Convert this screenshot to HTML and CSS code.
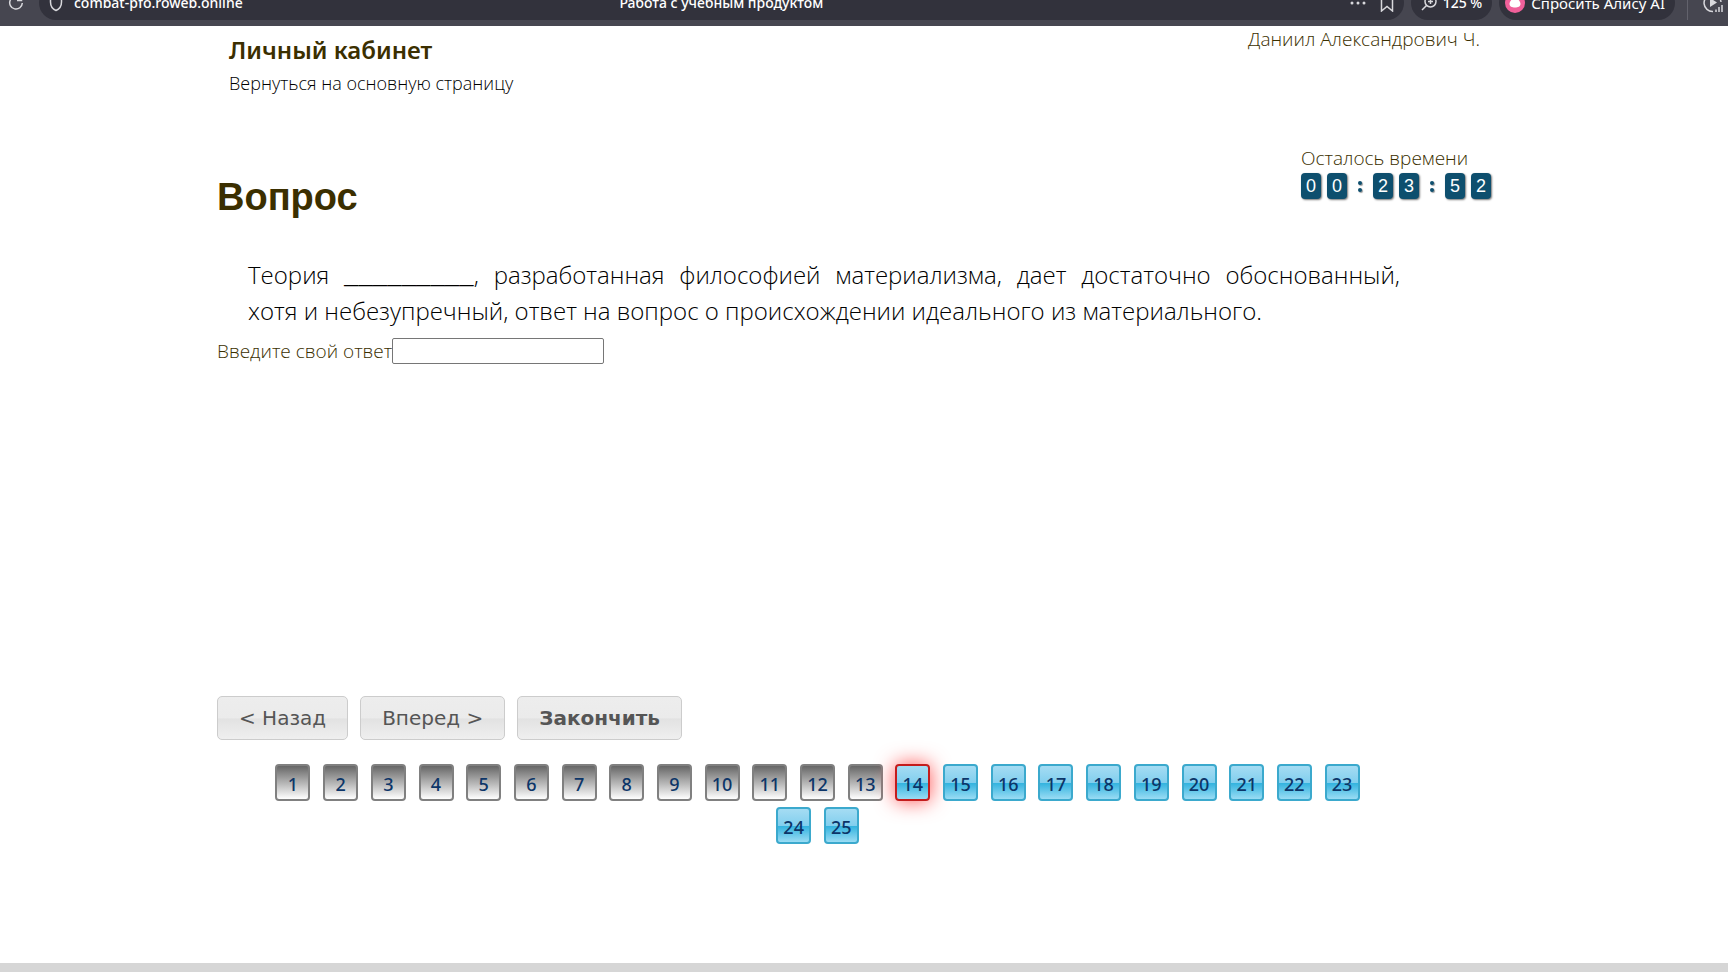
FILE: index.html
```html
<!DOCTYPE html>
<html lang="ru">
<head>
<meta charset="utf-8">
<title>Работа с учебным продуктом</title>
<link rel="stylesheet" href="styles.css">
</head>
<body>
<header class="browser">
  <button class="tool reload" aria-label="Обновить"><svg width="16" height="16" viewBox="0 0 16 16"><path d="M11.5 2.500A6.300 6.300 0 1 0 14.300 8M9 5.500h4.500V1"/></svg></button>
  <div class="pill address">
    <div class="site">
      <svg width="14" height="18" viewBox="0 0 14 18"><path d="M7 1l5.500 2v5c0 4-2 7-5.500 8.500C3.500 15 1.500 12 1.500 8V3z"/></svg>
      <span>combat-pfo.roweb.online</span>
    </div>
    <span class="page-title">Работа с учебным продуктом</span>
    <div class="actions">
      <button class="tool dots" aria-label="Ещё"><svg width="16" height="4" viewBox="0 0 16 4"><circle cx="2" cy="2" r="1.500"/><circle cx="8" cy="2" r="1.500"/><circle cx="14" cy="2" r="1.500"/></svg></button>
      <button class="tool" aria-label="В закладки"><svg width="14" height="18" viewBox="0 0 14 18"><path d="M1.500 1h11v16L7 12.500 1.500 17z"/></svg></button>
    </div>
  </div>
  <button class="pill zoom"><svg width="16" height="16" viewBox="0 0 16 16"><circle cx="9.500" cy="6.500" r="5.500"/><path d="M5.500 10.500L1 15M9.500 4v5M7 6.500h5"/></svg>125 %</button>
  <button class="pill alice"><svg width="20" height="20" viewBox="0 0 20 20"><circle class="pink" cx="10" cy="10" r="10"/><path class="drop" d="M10 2C8 5 4.500 8.500 4.500 11c0 2.500 2.500 3.500 5.500 3.500s5.500-1 5.500-3.500C15.500 8.500 12 5 10 2z"/></svg>Спросить Алису AI</button>
  <span class="divider"></span>
  <button class="tool media" aria-label="Медиа"><svg width="21" height="20" viewBox="0 0 21 20"><path d="M10 18.500A8.500 8.500 0 1 1 18 9"/><path class="solid" d="M7 5v9l7-4.500z"/><path d="M13 16.500V19M16 14v5M19 12v7"/></svg></button>
</header>

<div class="page">
  <div class="top">
    <div>
      <h2 class="cabinet">Личный кабинет</h2>
      <a class="back" href="#">Вернуться на основную страницу</a>
    </div>
    <span class="user">Даниил Александрович Ч.</span>
  </div>

  <div class="heading">
    <h1 class="question-title">Вопрос</h1>
    <div class="timer">
      <span>Осталось времени</span>
      <div class="clock">
        <span class="digit">0</span><span class="digit">0</span><span class="colon"></span><span class="digit">2</span><span class="digit">3</span><span class="colon"></span><span class="digit">5</span><span class="digit">2</span>
      </div>
    </div>
  </div>

  <form class="question">
    <p class="text">Теория <span class="blank">_________</span>, разработанная философией материализма, дает достаточно обоснованный, хотя&nbsp;и небезупречный, ответ на вопрос о происхождении идеального из материального.</p>
    <div class="answer"><label for="answer">Введите свой ответ</label><input id="answer" type="text"></div>
    <div class="controls">
      <button type="button">&lt; Назад</button>
      <button type="button">Вперед &gt;</button>
      <button type="button" class="finish">Закончить</button>
    </div>
  </form>

  <nav class="numbers">
    <a class="done" href="#">1</a>
    <a class="done" href="#">2</a>
    <a class="done" href="#">3</a>
    <a class="done" href="#">4</a>
    <a class="done" href="#">5</a>
    <a class="done" href="#">6</a>
    <a class="done" href="#">7</a>
    <a class="done" href="#">8</a>
    <a class="done" href="#">9</a>
    <a class="done" href="#">10</a>
    <a class="done" href="#">11</a>
    <a class="done" href="#">12</a>
    <a class="done" href="#">13</a>
    <a class="current" href="#">14</a>
    <a href="#">15</a>
    <a href="#">16</a>
    <a href="#">17</a>
    <a href="#">18</a>
    <a href="#">19</a>
    <a href="#">20</a>
    <a href="#">21</a>
    <a href="#">22</a>
    <a href="#">23</a>
    <a href="#">24</a>
    <a href="#">25</a>
  </nav>
</div>
<footer class="footer"></footer>
</body>
</html>
```
FILE: styles.css
```css
* { box-sizing: border-box; }

body {
  margin: 0;
  min-height: 100vh;
  display: flex;
  flex-direction: column;
  background: #fff;
  color: #3b2f00;
  font: 300 19px/24px "Open Sans", "Noto Sans", sans-serif;
}

h1, h2, p { margin: 0; }

button { font: inherit; }

/* Browser bar */
.browser {
  height: 26px;
  padding: 0 4px 6px 8px;
  display: flex;
  align-items: flex-end;
  gap: 7px;
  overflow: hidden;
  background: #464650;
  color: #fff;
  font: 500 14px/20px "Noto Sans", sans-serif;
}

.browser svg {
  display: block;
  flex: none;
  fill: none;
  stroke: #d8d8dc;
  stroke-width: 1.5;
}

.browser .dots svg, .browser .solid { fill: #d8d8dc; stroke: none; }
.browser .alice svg { stroke: none; }
.browser .pink { fill: #f0609a; }
.browser .drop { fill: #fff; }

.tool, .pill {
  height: 34px;
  flex: none;
  display: flex;
  align-items: center;
  border: 0;
  padding: 0;
  background: none;
  color: inherit;
}

.pill {
  padding: 0 10px;
  gap: 6px;
  border-radius: 17px;
  background: #32323c;
}

.reload { margin-right: 8px; }

.address {
  flex: 1;
  display: grid;
  grid-template-columns: 1fr auto 1fr;
}

.site, .actions { display: flex; align-items: center; gap: 11px; }
.actions { justify-content: flex-end; gap: 14px; }

.alice {
  padding: 0 10px 0 6px;
  font-size: 15px;
  font-weight: 400;
}

.divider {
  width: 1px;
  height: 20px;
  margin: 0 8px 0 5px;
  background: #62626c;
}

/* Page */
.page {
  width: 75%;
  margin: 0 auto;
  padding-left: 1px;
  flex: 1;
}

.top {
  display: flex;
  justify-content: space-between;
  padding: 1px 32px 0 12px;
}

.cabinet {
  padding-top: 7px;
  font: 600 24px/32px "Noto Sans", sans-serif;
}

.back {
  display: block;
  margin-top: 5px;
  color: #000;
  font-size: 18px;
  text-decoration: none;
}

.heading {
  display: flex;
  justify-content: space-between;
  align-items: flex-start;
  padding: 51px 21px 0 0;
}

.question-title {
  padding-top: 29px;
  font: 700 38px/44px "Liberation Sans", Arial, sans-serif;
}

.clock {
  display: flex;
  gap: 6px;
  margin-top: 3px;
  font: 400 18px/26px "Liberation Sans", Arial, sans-serif;
}

.digit {
  width: 20px;
  border-radius: 4px;
  background: #0e4f6e;
  box-shadow: 1px 1px 2px #777;
  color: #fff;
  text-align: center;
}

.colon {
  width: 14px;
  display: flex;
  flex-direction: column;
  align-items: center;
  justify-content: center;
  gap: 3px;
}

.colon::before, .colon::after {
  content: "";
  width: 4px;
  height: 4px;
  border-radius: 50%;
  background: #0e4f6e;
  box-shadow: 1px 1px 1px #999;
}

.text {
  margin: 38px 112px 0 31px;
  color: #000;
  font-size: 24px;
  line-height: 36px;
  text-align: justify;
}

.blank {
  font-family: "Liberation Mono", monospace;
  line-height: 1;
}

.answer {
  display: flex;
  align-items: center;
  margin-top: 9px;
}

.answer input {
  width: 212px;
  height: 26px;
  border: 1px solid #767676;
  border-radius: 2px;
  background: #fff;
  font: inherit;
}

.controls {
  display: flex;
  gap: 12px;
  margin-top: 332px;
}

.controls button {
  height: 44px;
  padding: 0 21px;
  border: 1px solid #ccc;
  border-radius: 5px;
  background: linear-gradient(#ededed, #ebebeb 50%, #e2e2e2 52%, #efefef);
  color: #555;
  font: 400 20px/24px "DejaVu Sans", Verdana, sans-serif;
}

.controls .finish { font-weight: 700; }

.numbers {
  max-width: 1201px;
  padding: 23px 40px 0;
  text-align: center;
  font: 500 18px/43px "Noto Sans", sans-serif;
}

.numbers a {
  display: inline-block;
  width: 35px;
  height: 37px;
  margin: 0 4px;
  border: 2px solid #3ba9cd;
  border-radius: 4px;
  background: linear-gradient(#a5dcf3, #82cfee 50%, #33b3df 52%, #9adcf4);
  color: #0c3568;
  line-height: 36px;
  text-decoration: none;
}

.numbers .done {
  border-color: #808080;
  background: linear-gradient(#666, #fff);
}

.numbers .current {
  border-color: #c41c1c;
  box-shadow: 0 0 20px #ff5050;
}

.footer {
  height: 9px;
  background: #d6d6d6;
}
```
